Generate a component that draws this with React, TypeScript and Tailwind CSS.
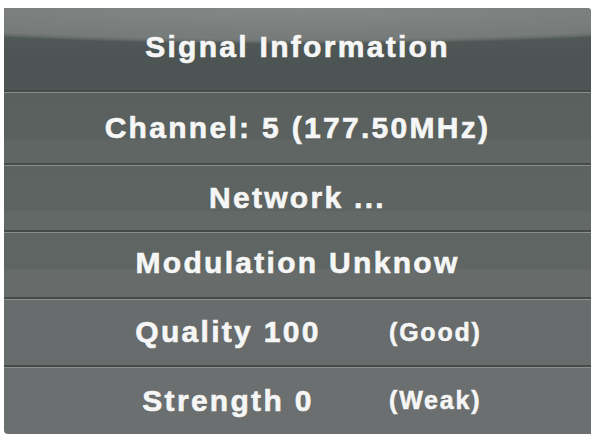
import React from "react";

const font = { fontFamily: '"Liberation Sans", Arial, sans-serif' };

function Row({
  className,
  children,
}: {
  className: string;
  children: React.ReactNode;
}) {
  return (
    <div
      className={`flex items-center border-t-2 border-[#464b4a] shadow-[inset_0_1px_0_#8a8e8d] ${className}`}
    >
      {children}
    </div>
  );
}

export default function App() {
  const txt =
    "font-bold text-[30px] leading-none tracking-[2.3px] text-[#f5f6f5] [-webkit-text-stroke:0.7px_#f5f6f5] [text-shadow:0_0_1px_rgba(0,0,0,0.5)]";
  const small =
    "font-bold text-[25px] leading-none tracking-[1.8px] text-[#f5f6f5] [-webkit-text-stroke:0.6px_#f5f6f5] [text-shadow:0_0_1px_rgba(0,0,0,0.5)]";
  return (
    <div className="w-[595px] h-[434px] bg-white overflow-hidden" style={font}>
      <div className="ml-[4px] mt-[8px] w-[587px] h-[426px] flex flex-col rounded-tr-[3px] rounded-bl-[4px] overflow-hidden">
        <div className="h-[82px] flex items-center justify-center pb-[4px] bg-[radial-gradient(ellipse_120%_60%_at_50%_0%,#858887_0%,#767a79_64%,#6a706e_68%,#4f5856_73%,#4c5553_100%)]">
          <span className={txt}>Signal Information</span>
        </div>
        <Row className="h-[73px] justify-center bg-[linear-gradient(#59605e_0%,#5a615f_66%,#5f6664_68%,#5f6664_100%)]">
          <span className={txt}>Channel: 5 (177.50MHz)</span>
        </Row>
        <Row className="h-[67px] justify-center bg-[linear-gradient(#5c6361_0%,#5d6462_70%,#636967_72%,#636967_100%)]">
          <span className={txt}>Network ...</span>
        </Row>
        <Row className="h-[67px] justify-center pb-[3px] bg-[linear-gradient(#5f6563_0%,#5f6563_56%,#676b6a_58%,#676b6a_100%)]">
          <span className={txt}>Modulation Unknow</span>
        </Row>
        <Row className="h-[68px] pl-[124px] bg-[#696c6c]">
          <span className={`${txt} w-[200px] text-center`}>Quality 100</span>
          <span className={`ml-[61px] ${small}`}>(Good)</span>
        </Row>
        <Row className="h-[69px] pl-[124px] bg-[#6c6f6f]">
          <span className={`${txt} w-[200px] text-center`}>Strength 0</span>
          <span className={`ml-[61px] ${small}`}>(Weak)</span>
        </Row>
      </div>
    </div>
  );
}
